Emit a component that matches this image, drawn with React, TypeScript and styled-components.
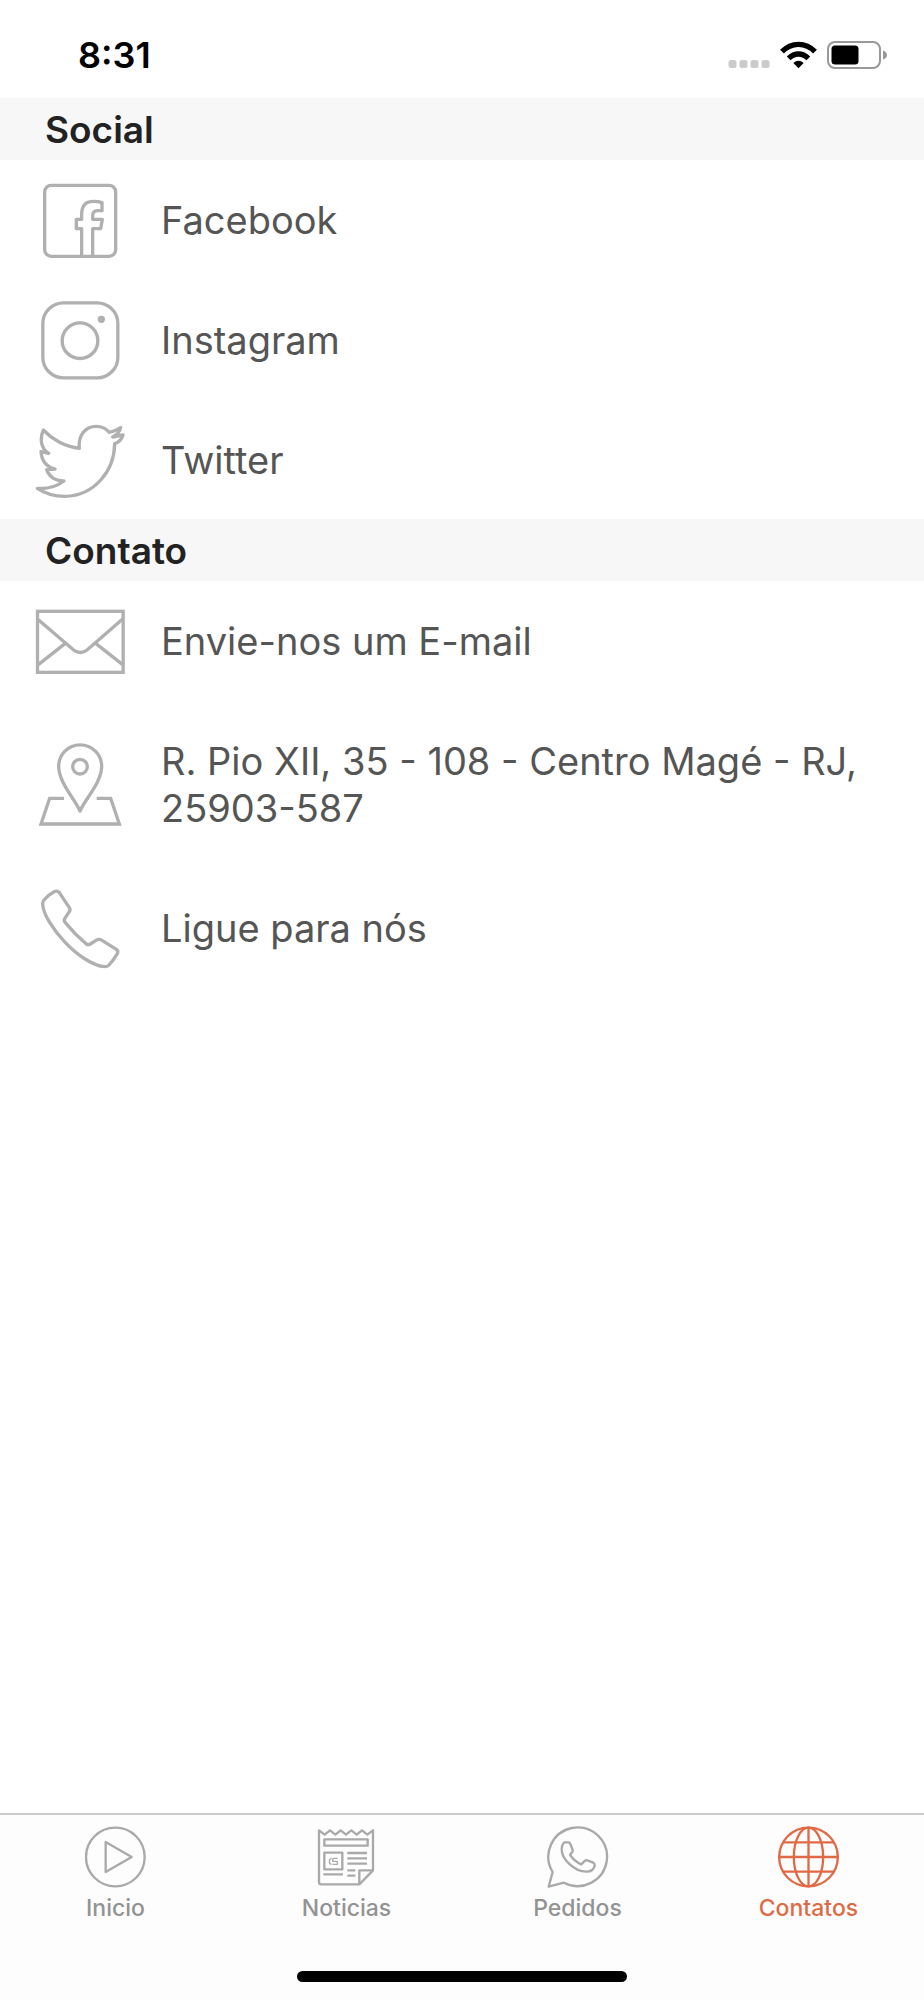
import React from "react";
import styled, { createGlobalStyle } from "styled-components";

const GlobalStyle = createGlobalStyle`
  *, *::before, *::after { box-sizing: border-box; }
  body {
    margin: 0;
    background: #ffffff;
    font-family: Inter, "Liberation Sans", sans-serif;
  }
`;

const Screen = styled.div`
  display: flex;
  flex-direction: column;
  min-height: 100vh;
`;

const StatusBar = styled.header`
  display: flex;
  align-items: center;
  justify-content: space-between;
  padding: 33px 37px 21px 78px;
`;

const Clock = styled.time`
  color: #000000;
  font-size: 36px;
  font-weight: 600;
  line-height: 44px;
`;

const Indicators = styled.div`
  display: flex;
  align-items: center;
  gap: 10px;
`;

const Content = styled.main`
  flex: 1;
`;

const SectionTitle = styled.h2`
  margin: 0;
  padding: 9px 45px 7px;
  background: #f7f7f7;
  color: #222222;
  font-size: 37px;
  font-weight: 600;
  line-height: 46px;
`;

const List = styled.ul`
  display: flex;
  flex-direction: column;
  gap: 1px;
  margin: 0;
  padding: 0;
  list-style: none;
`;

const Row = styled.a`
  display: flex;
  align-items: center;
  gap: 36px;
  min-height: 119px;
  padding: 0 50px 0 35px;
  color: #555555;
  text-decoration: none;
`;

const RowLabel = styled.span`
  flex: 1;
  padding: 37px 0 35px;
  font-size: 38px;
  line-height: 47px;
`;

const LineIcon = styled.svg<{ $size: number }>`
  flex: none;
  width: ${(p) => p.$size}px;
  height: ${(p) => p.$size}px;
  fill: none;
  stroke: currentColor;
  stroke-width: ${(p) => (p.$size > 70 ? 10 : 7)};
  stroke-linejoin: round;
`;

const RowIcon = styled(LineIcon)`
  color: #b0b0b0;
`;

const TabBar = styled.footer`
  display: flex;
  flex-direction: column;
  align-items: center;
  gap: 49px;
  padding-bottom: 18px;
  border-top: 2px solid #cccccc;
  background: #fdfdfd;
`;

const Tabs = styled.nav`
  display: grid;
  grid-template-columns: repeat(4, 1fr);
  width: 100%;
`;

const Tab = styled.a<{ $active?: boolean }>`
  display: flex;
  flex-direction: column;
  align-items: center;
  gap: 6px;
  padding-top: 11px;
  color: ${(p) => (p.$active ? "#e06a45" : "#a9a9a9")};
  text-decoration: none;
`;

const TabLabel = styled.span<{ $active?: boolean }>`
  color: ${(p) => (p.$active ? "#e06a45" : "#939393")};
  font-size: 23px;
  font-weight: 500;
  line-height: 28px;
`;

const HomeIndicator = styled.div`
  width: 330px;
  height: 11px;
  border-radius: 6px;
  background: #000000;
`;

const Signal = () => (
  <svg width="42" height="28" viewBox="0 0 42 28" fill="#cbcbcb" aria-hidden="true">
    {[0, 11, 22, 33].map((x) => (
      <rect key={x} x={x + 0.5} y="19" width="8" height="8" rx="2.5" />
    ))}
  </svg>
);

const Wifi = () => (
  <svg width="37" height="28" viewBox="0 0 111 84" aria-hidden="true">
    <g fill="none" stroke="#000000" strokeWidth="16">
      <path d="M6 32 Q27 10 55.500 10 Q84 10 105 32" />
      <path d="M26 52 Q39 39 55.500 39 Q72 39 85 52" />
    </g>
    <path d="M40 66 Q55.500 53 71 66 L55.500 82Z" />
  </svg>
);

const Battery = () => (
  <svg width="60" height="28" viewBox="0 0 60 28" aria-hidden="true">
    <rect x="1" y="1" width="52" height="26" rx="7" fill="none" stroke="#999999" strokeWidth="2" />
    <rect x="4.500" y="4.500" width="27" height="19" rx="3.500" />
    <path d="M56 9.500 Q60 11 60 14 Q60 17 56 18.500Z" fill="#999999" />
  </svg>
);

const rowIcon = (box: string, children: React.ReactNode) => (
  <RowIcon $size={90} viewBox={box} aria-hidden="true">
    {children}
  </RowIcon>
);

const tabIcon = (box: string, children: React.ReactNode) => (
  <LineIcon $size={62} viewBox={box} aria-hidden="true">
    {children}
  </LineIcon>
);

const facebook = rowIcon(
  "105 524 270 270",
  <>
    <rect x="134" y="555" width="213" height="213" rx="20" />
    <path d="M245 768 V685 H229 V657 H245 V642 C245 615 258 603 280 603 Q296 603 306 607 V631 H292 Q278 632 278 646 V657 H307 L302 685 H278 V768" />
  </>
);

const instagram = rowIcon(
  "45 44 270 270",
  <>
    <rect x="68.500" y="67.500" width="225" height="225" rx="62" />
    <circle cx="180" cy="181" r="53.500" />
    <circle cx="244" cy="117" r="11" fill="currentColor" stroke="none" />
  </>
);

const twitter = rowIcon(
  "45 404 270 270",
  <path d="M52 624 C80 643 108 648 135 648 C225 646 283 570 284 490 Q303 484 309 464 L278 470 Q298 460 302 442 Q285 453 268 456 C257 443 245 438 229 438 C198 438 174 462 178 504 C135 500 95 476 70 449 C60 472 60 502 86 519 L63 514 C65 542 80 560 105 566 L80 568 C88 590 107 603 132 602 C110 618 85 627 52 624Z" />
);

const mail = rowIcon(
  "105 257 270 270",
  <>
    <rect x="112.500" y="303" width="257" height="183" strokeLinejoin="miter" />
    <path d="M115 328 L213 412 Q241 441 269 412 L368 326 M115 463 L195 400 M368 463 L288 400" />
  </>
);

const mapPin = rowIcon(
  "45 57 270 270",
  <>
    <path d="M180 273 C164 236 116 188 116 139 A64.500 64.500 0 0 1 245 139 C245 188 196 236 180 273Z" />
    <circle cx="180" cy="140" r="22" />
    <path d="M132 235 H89 L63 312 H298 L272 235 H230" strokeLinejoin="miter" />
  </>
);

const phone = rowIcon(
  "45 487 270 270",
  <path d="M118 516 L148 561 Q152 567 148 573 L134 594 Q131 600 136 606 Q165 642 199 670 Q205 674 211 670 L228 659 Q237 653 246 659 L289 686 Q296 691 292 699 Q281 718 266 734 Q262 738 254 738 C180 732 70 608 68 550 Q68 543 72 538 Q86 522 101 514 Q111 508 118 516Z" />
);

const play = tabIcon(
  "74 77 186 186",
  <>
    <circle cx="165" cy="170" r="88" />
    <path d="M136 125 L214 170 L136 215Z" />
  </>
);

const news = tabIcon(
  "768 77 186 186",
  <>
    <path d="M777 90 L794 103 L810 90 L826 103 L842 90 L858 103 L874 90 L890 103 L906 90 L922 103 L939 90 V210 L898 252 H785 Q777 252 777 244Z" />
    <path d="M939 210 H898 V252" />
    <rect x="793" y="117" width="130" height="19" />
    <rect x="793" y="157" width="54" height="50" />
    <path d="M862 158 H921 M862 174 H921 M862 190 H921 M862 210 H886 M862 226 H886 M790 222 H849" />
    <path
      d="M815 174 Q808 174 808 183 Q808 192 815 192 M833 174 H823 Q818 174 818 179 V183 H832 V192 H818"
      strokeWidth="4"
    />
  </>
);

const chat = tabIcon(
  "141 77 186 186",
  <>
    <path d="M158 215 A88 88 0 1 1 192 247 L146 259Z" />
    <path d="M194 126 H205 Q209 126 211 131 L218 149 Q219 152 217 155 L210 163 Q222 183 244 192 L255 181 Q258 179 262 180 L280 187 Q285 190 284 196 Q279 215 259 214 C222 214 184 175 185 146 Q186 131 194 126Z" />
  </>
);

const globe = tabIcon(
  "835 77 186 186",
  <>
    <circle cx="926.500" cy="170" r="88" />
    <ellipse cx="926.500" cy="170" rx="44" ry="88" />
    <path d="M926.500 81 V259 M837 170 H1016 M850 126 H1003 M850 214 H1003" />
  </>
);

const sections = [
  {
    title: "Social",
    items: [
      { label: "Facebook", icon: facebook },
      { label: "Instagram", icon: instagram },
      { label: "Twitter", icon: twitter },
    ],
  },
  {
    title: "Contato",
    items: [
      { label: "Envie-nos um E-mail", icon: mail },
      { label: "R. Pio XII, 35 - 108 - Centro Magé - RJ, 25903-587", icon: mapPin },
      { label: "Ligue para nós", icon: phone },
    ],
  },
];

const tabs = [
  { label: "Inicio", icon: play },
  { label: "Noticias", icon: news },
  { label: "Pedidos", icon: chat },
  { label: "Contatos", icon: globe, active: true },
];

export default function App() {
  return (
    <>
      <GlobalStyle />
      <Screen>
        <StatusBar>
          <Clock>8:31</Clock>
          <Indicators>
            <Signal />
            <Wifi />
            <Battery />
          </Indicators>
        </StatusBar>
        <Content>
          {sections.map((section) => (
            <section key={section.title}>
              <SectionTitle>{section.title}</SectionTitle>
              <List>
                {section.items.map((item) => (
                  <li key={item.label}>
                    <Row href="#">
                      {item.icon}
                      <RowLabel>{item.label}</RowLabel>
                    </Row>
                  </li>
                ))}
              </List>
            </section>
          ))}
        </Content>
        <TabBar>
          <Tabs>
            {tabs.map((tab) => (
              <Tab
                key={tab.label}
                href="#"
                $active={tab.active}
                aria-current={tab.active ? "page" : undefined}
              >
                {tab.icon}
                <TabLabel $active={tab.active}>{tab.label}</TabLabel>
              </Tab>
            ))}
          </Tabs>
          <HomeIndicator />
        </TabBar>
      </Screen>
    </>
  );
}
